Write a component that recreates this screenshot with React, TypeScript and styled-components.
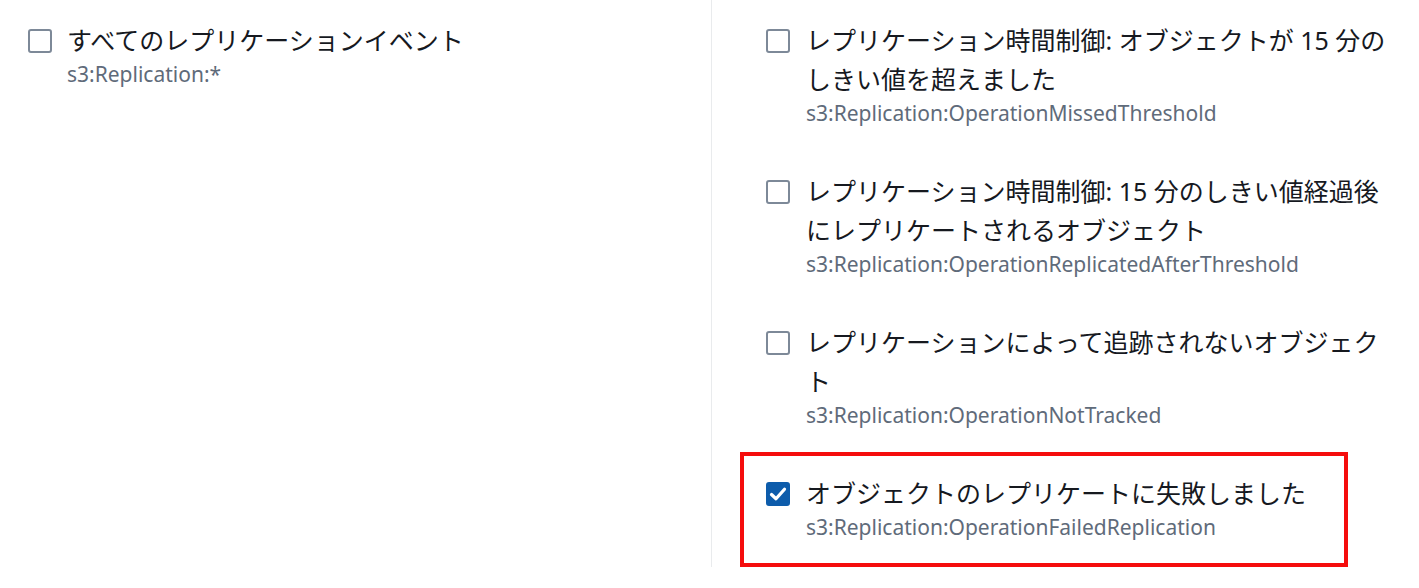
import React from "react";
import styled, { createGlobalStyle } from "styled-components";

const GlobalStyle = createGlobalStyle`
  html, body {
    margin: 0;
    padding: 0;
    background: #ffffff;
  }
  body {
    font-family: "Noto Sans", "Noto Sans CJK JP", sans-serif;
    color: #16191f;
  }
`;

const Page = styled.div`
  display: grid;
  grid-template-columns: 711px 1px 1fr;
  width: 1419px;
  height: 588px;
`;

const Column = styled.div<{ $padLeft: number; $padRight: number }>`
  display: flex;
  flex-direction: column;
  gap: 45px;
  padding: 21px ${({ $padRight }) => $padRight}px 0 ${({ $padLeft }) => $padLeft}px;
`;

const Divider = styled.div`
  background: #e9ebed;
  height: 567px;
`;

const Item = styled.label<{ $gap: number }>`
  display: flex;
  align-items: flex-start;
  gap: ${({ $gap }) => $gap}px;
  cursor: pointer;
`;

// red annotation frame drawn over the highlighted option
const Highlight = styled.div`
  position: relative;

  &::after {
    content: "";
    position: absolute;
    top: -22px;
    left: -26px;
    width: 608px;
    bottom: -26px;
    box-sizing: border-box;
    border: 4px solid #f50d0d;
    pointer-events: none;
  }
`;

const Box = styled.span<{ $checked: boolean }>`
  flex: none;
  box-sizing: border-box;
  width: 24px;
  height: 24px;
  margin-top: 7.5px;
  border-radius: 3px;
  border: 2px solid ${({ $checked }) => ($checked ? "#0d5cab" : "#7d8998")};
  background: ${({ $checked }) => ($checked ? "#0d5cab" : "#ffffff")};
  display: flex;
  align-items: center;
  justify-content: center;
`;

const Texts = styled.div`
  display: flex;
  flex-direction: column;
  min-width: 0;
`;

const Label = styled.span`
  font-size: 25px;
  line-height: 39px;
  color: #16191f;
`;

const Code = styled.span`
  font-size: 21px;
  line-height: 28px;
  color: #5f6b7a;
`;

interface OptionProps {
  label: string;
  code: string;
  checked?: boolean;
  gap: number;
}

const Option = ({ label, code, checked = false, gap }: OptionProps) => (
  <Item $gap={gap}>
    <Box $checked={checked}>
      {checked && (
        <svg width="20" height="20" viewBox="0 0 16 16" fill="none">
          <polyline
            points="2.8,8.4 6.4,11.8 13.2,4.2"
            stroke="#ffffff"
            strokeWidth="2.6"
            strokeLinecap="round"
            strokeLinejoin="round"
          />
        </svg>
      )}
    </Box>
    <Texts>
      <Label>{label}</Label>
      <Code>{code}</Code>
    </Texts>
  </Item>
);

export default function App() {
  return (
    <>
      <GlobalStyle />
      <Page>
        <Column $padLeft={28} $padRight={20}>
          <Option gap={15} label="すべてのレプリケーションイベント" code="s3:Replication:*" />
        </Column>
        <Divider />
        <Column $padLeft={54} $padRight={21}>
          <Option
            gap={16}
            label="レプリケーション時間制御: オブジェクトが 15 分のしきい値を超えました"
            code="s3:Replication:OperationMissedThreshold"
          />
          <Option
            gap={16}
            label="レプリケーション時間制御: 15 分のしきい値経過後にレプリケートされるオブジェクト"
            code="s3:Replication:OperationReplicatedAfterThreshold"
          />
          <Option
            gap={16}
            label="レプリケーションによって追跡されないオブジェクト"
            code="s3:Replication:OperationNotTracked"
          />
          <Highlight>
            <Option
              gap={16}
              checked
              label="オブジェクトのレプリケートに失敗しました"
              code="s3:Replication:OperationFailedReplication"
            />
          </Highlight>
        </Column>
      </Page>
    </>
  );
}
